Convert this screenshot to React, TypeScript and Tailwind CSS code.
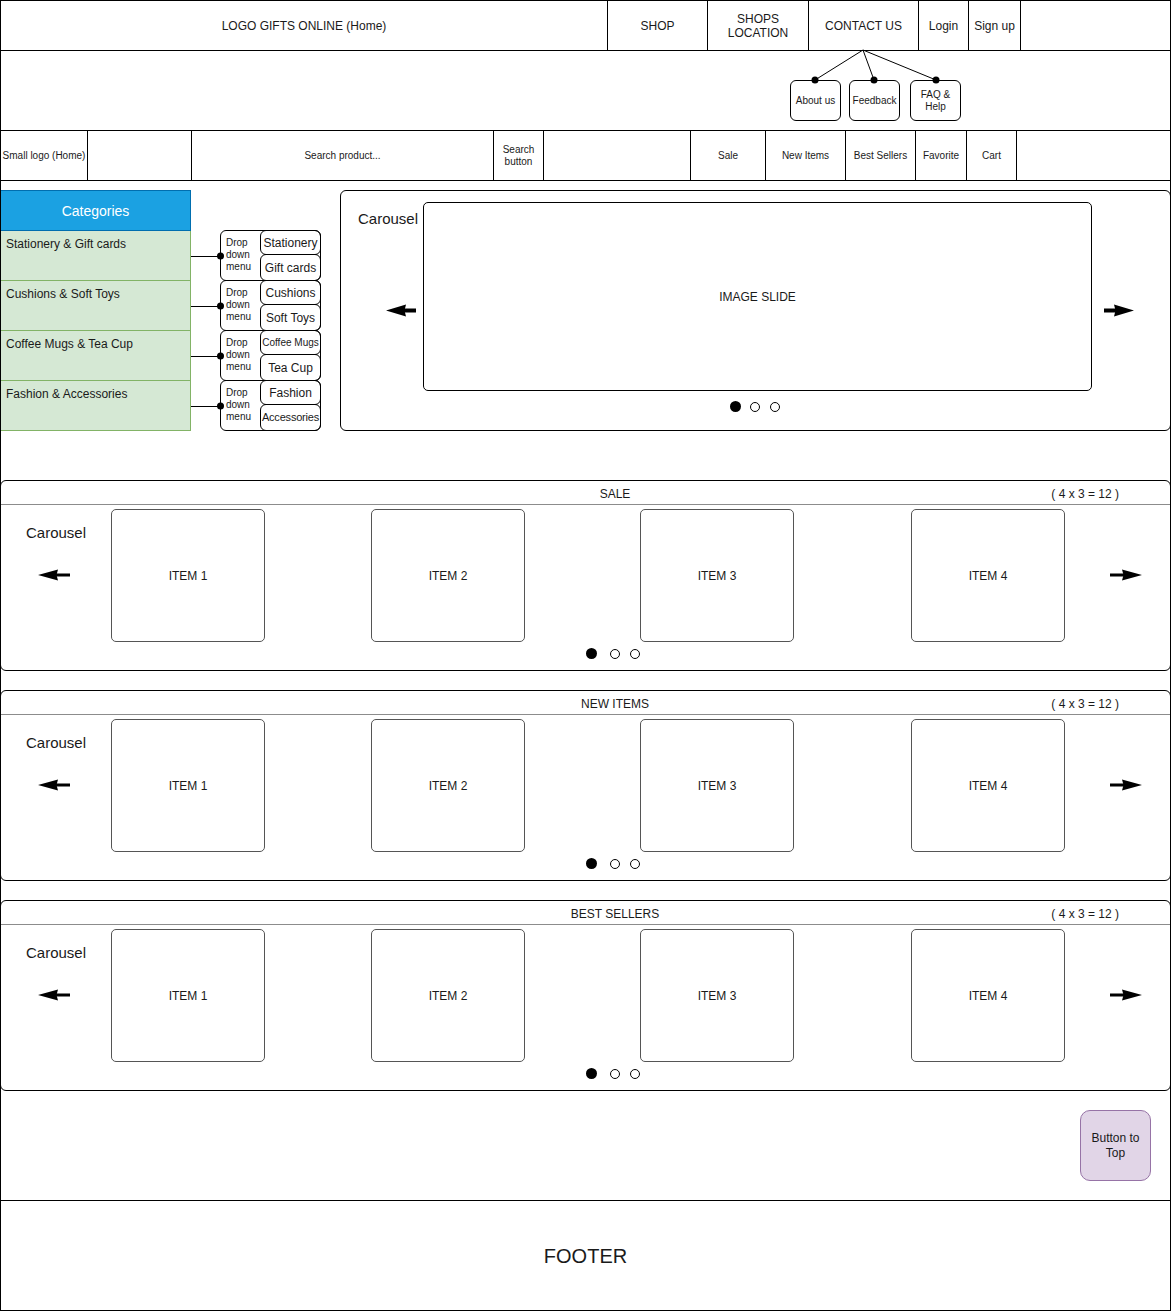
import React from 'react';

interface ArrowProps {
  right?: boolean;
  big?: boolean;
  className?: string;
}

const Arrow: React.FC<ArrowProps> = ({ right, big, className = '' }) => {
  const flip = right ? '-scale-x-100' : '';
  if (big) {
    return (
      <svg width="30" height="13" viewBox="0 0 30 13" className={`block ${flip} ${className}`}>
        <polygon points="0,6.5 20,0.5 18.5,6.5 20,12.5" fill="#000" />
        <rect x="15" y="4.5" width="15" height="4" fill="#000" />
      </svg>
    );
  }
  return (
    <svg width="32" height="12" viewBox="0 0 32 12" className={`block ${flip} ${className}`}>
      <polygon points="0,6 20,0.5 18.5,6 20,11.5" fill="#000" />
      <rect x="15" y="4.5" width="17" height="3" fill="#000" />
    </svg>
  );
};

const categories = [
  { name: 'Stationery & Gift cards', subs: [{ label: 'Stationery', cls: 'text-xs' }, { label: 'Gift cards', cls: 'text-xs' }] },
  { name: 'Cushions & Soft Toys', subs: [{ label: 'Cushions', cls: 'text-xs' }, { label: 'Soft Toys', cls: 'text-xs' }] },
  { name: 'Coffee Mugs & Tea Cup', subs: [{ label: 'Coffee Mugs', cls: 'text-[10px]' }, { label: 'Tea Cup', cls: 'text-xs' }] },
  { name: 'Fashion & Accessories', subs: [{ label: 'Fashion', cls: 'text-xs' }, { label: 'Accessories', cls: 'text-[11px] tracking-[-0.2px]' }] },
];

const items = [
  { label: 'ITEM 1', ml: '' },
  { label: 'ITEM 2', ml: 'ml-[106px]' },
  { label: 'ITEM 3', ml: 'ml-[115px]' },
  { label: 'ITEM 4', ml: 'ml-[117px]' },
];

const ProductSection: React.FC<{ title: string }> = ({ title }) => (
  <div className="-mx-px h-[191px] rounded-md border border-black flex flex-col">
    {/* header strip */}
    <div className="h-6 shrink-0 border-b border-[#8c8c8c] flex items-center pt-[2px] text-xs">
      <span className="ml-[514px] w-[200px] text-center">{title}</span>
      <span className="ml-auto mr-[51px]">( 4 x 3 = 12 )</span>
    </div>

    <div className="flex items-start pt-1">
      <div className="w-[110px] shrink-0 flex flex-col">
        <span className="pl-[25px] mt-[15px] text-[15px] leading-[17px]">Carousel</span>
        <Arrow className="ml-[37px] mt-[28px]" />
      </div>
      {items.map(item => (
        <div
          key={item.label}
          className={`${item.ml} w-[154px] h-[133px] shrink-0 rounded-[5px] border border-[#555] flex items-center justify-center text-xs`}
        >
          {item.label}
        </div>
      ))}
      <Arrow right className="ml-[45px] mt-[60px]" />
    </div>

    {/* pager */}
    <div className="flex items-center mt-[6px] ml-[585px]">
      <div className="w-[11px] h-[11px] rounded-full bg-black"></div>
      <div className="ml-[13px] w-[10px] h-[10px] rounded-full border border-black"></div>
      <div className="ml-[10px] w-[10px] h-[10px] rounded-full border border-black"></div>
    </div>
  </div>
);

const App: React.FC = () => {
  return (
    <div className="w-[1171px] h-[1311px] bg-white border border-black flex flex-col text-[#1a1a1a] font-['Liberation_Sans',Arial,sans-serif] overflow-hidden">
      {/* Top navigation */}
      <div className="h-[50px] shrink-0 border-b border-black flex text-xs">
        <div className="w-[607px] border-r border-black flex items-center justify-center">LOGO GIFTS ONLINE (Home)</div>
        <div className="w-[100px] border-r border-black flex items-center justify-center">SHOP</div>
        <div className="w-[101px] border-r border-black flex items-center justify-center text-center leading-[14px]">
          SHOPS<br />LOCATION
        </div>
        <div className="w-[110px] border-r border-black flex items-center justify-center">CONTACT US</div>
        <div className="w-[50px] border-r border-black flex items-center justify-center">Login</div>
        <div className="w-[52px] border-r border-black flex items-center justify-center">Sign up</div>
        <div className="flex-1"></div>
      </div>

      {/* Contact us submenu */}
      <div className="relative h-[80px] shrink-0 border-b border-black flex items-start pt-[29px] text-[10px]">
        <div className="ml-[789px] w-[51px] h-[41px] rounded-md border border-black flex items-center justify-center">About us</div>
        <div className="ml-[8px] w-[51px] h-[41px] rounded-md border border-black flex items-center justify-center">Feedback</div>
        <div className="ml-[10px] w-[51px] h-[41px] rounded-md border border-black flex items-center justify-center text-center leading-[12px]">
          FAQ &amp;<br />Help
        </div>
        <svg className="absolute left-0 top-0 overflow-visible pointer-events-none" width="1169" height="79">
          <line x1="862" y1="-1" x2="814" y2="29" stroke="#000" strokeWidth="1" />
          <line x1="862" y1="-1" x2="873" y2="29" stroke="#000" strokeWidth="1" />
          <line x1="862" y1="-1" x2="935" y2="29" stroke="#000" strokeWidth="1" />
          <circle cx="814" cy="29" r="3.5" fill="#000" />
          <circle cx="873" cy="29" r="3.5" fill="#000" />
          <circle cx="935" cy="29" r="3.5" fill="#000" />
        </svg>
      </div>

      {/* Search bar row */}
      <div className="h-[50px] shrink-0 border-b border-black flex text-[10px]">
        <div className="w-[87px] border-r border-black flex items-center justify-center whitespace-nowrap">Small logo (Home)</div>
        <div className="w-[104px] border-r border-black"></div>
        <div className="w-[302px] border-r border-black flex items-center justify-center">Search product...</div>
        <div className="w-[50px] border-r border-black flex items-center justify-center text-center leading-[12px]">
          Search<br />button
        </div>
        <div className="w-[147px] border-r border-black"></div>
        <div className="w-[75px] border-r border-black flex items-center justify-center">Sale</div>
        <div className="w-[80px] border-r border-black flex items-center justify-center">New Items</div>
        <div className="w-[70px] border-r border-black flex items-center justify-center">Best Sellers</div>
        <div className="w-[51px] border-r border-black flex items-center justify-center">Favorite</div>
        <div className="w-[50px] border-r border-black flex items-center justify-center">Cart</div>
        <div className="flex-1"></div>
      </div>

      {/* Categories + hero carousel */}
      <div className="flex items-start pt-[9px] shrink-0">
        <div className="-ml-px flex flex-col">
          <div className="w-[191px] h-[41px] bg-[#1ba1e2] border border-[#006eaf] flex items-center justify-center text-white text-sm">
            Categories
          </div>
          {categories.map(cat => (
            <div key={cat.name} className="flex h-[50px]">
              <div className="w-[191px] h-[50px] bg-[#d5e8d4] border-x border-b border-[#82b366] pl-[5px] pt-[6px] text-xs leading-[14px]">
                {cat.name}
              </div>
              <div className="w-[29px] flex items-center">
                <div className="w-full h-px bg-black"></div>
              </div>
              <div className="relative -mt-px w-[101px] h-[51px] rounded-md border border-black flex">
                <span className="absolute -left-[4px] top-1/2 -translate-y-1/2 w-[7px] h-[7px] rounded-full bg-black"></span>
                <div className="w-[39px] pl-[5px] pt-[6px] text-[10px] leading-[12px]">
                  Drop<br />down<br />menu
                </div>
                <div className="-mr-px -my-px w-[61px] flex flex-col">
                  <div className={`h-[25px] rounded-md border border-black flex items-center justify-center whitespace-nowrap ${cat.subs[0].cls}`}>
                    {cat.subs[0].label}
                  </div>
                  <div className={`-mt-px h-[27px] rounded-md border border-black flex items-center justify-center whitespace-nowrap ${cat.subs[1].cls}`}>
                    {cat.subs[1].label}
                  </div>
                </div>
              </div>
            </div>
          ))}
        </div>

        <div className="ml-[19px] -mr-px flex-1 h-[241px] rounded-md border border-black flex flex-col">
          <div className="flex items-start pt-[11px]">
            <div className="w-[82px] shrink-0 flex flex-col">
              <span className="text-right pr-[5px] mt-[8px] text-[15px] leading-[17px]">Carousel</span>
              <Arrow big className="ml-[45px] mt-[77px]" />
            </div>
            <div className="w-[669px] h-[189px] shrink-0 rounded-[5px] border border-black flex items-center justify-center text-xs">
              IMAGE SLIDE
            </div>
            <Arrow big right className="ml-[12px] mt-[102px]" />
          </div>
          <div className="flex items-center mt-[10px] ml-[389px]">
            <div className="w-[11px] h-[11px] rounded-full bg-black"></div>
            <div className="ml-[9px] w-[10px] h-[10px] rounded-full border border-black"></div>
            <div className="ml-[10px] w-[10px] h-[10px] rounded-full border border-black"></div>
          </div>
        </div>
      </div>

      {/* Product carousels */}
      <div className="mt-[49px] shrink-0">
        <ProductSection title="SALE" />
      </div>
      <div className="mt-[19px] shrink-0">
        <ProductSection title="NEW ITEMS" />
      </div>
      <div className="mt-[19px] shrink-0">
        <ProductSection title="BEST SELLERS" />
      </div>

      {/* Back to top */}
      <div className="h-[110px] shrink-0 border-b border-black flex justify-end items-start pt-[19px] pr-[19px]">
        <button className="w-[71px] h-[71px] rounded-[10px] bg-[#e1d5e7] border border-[#9673a6] text-xs leading-[15px] text-center">
          Button to<br />Top
        </button>
      </div>

      {/* Footer */}
      <div className="flex-1 flex items-center justify-center text-[20px]">FOOTER</div>
    </div>
  );
};

export default App;
